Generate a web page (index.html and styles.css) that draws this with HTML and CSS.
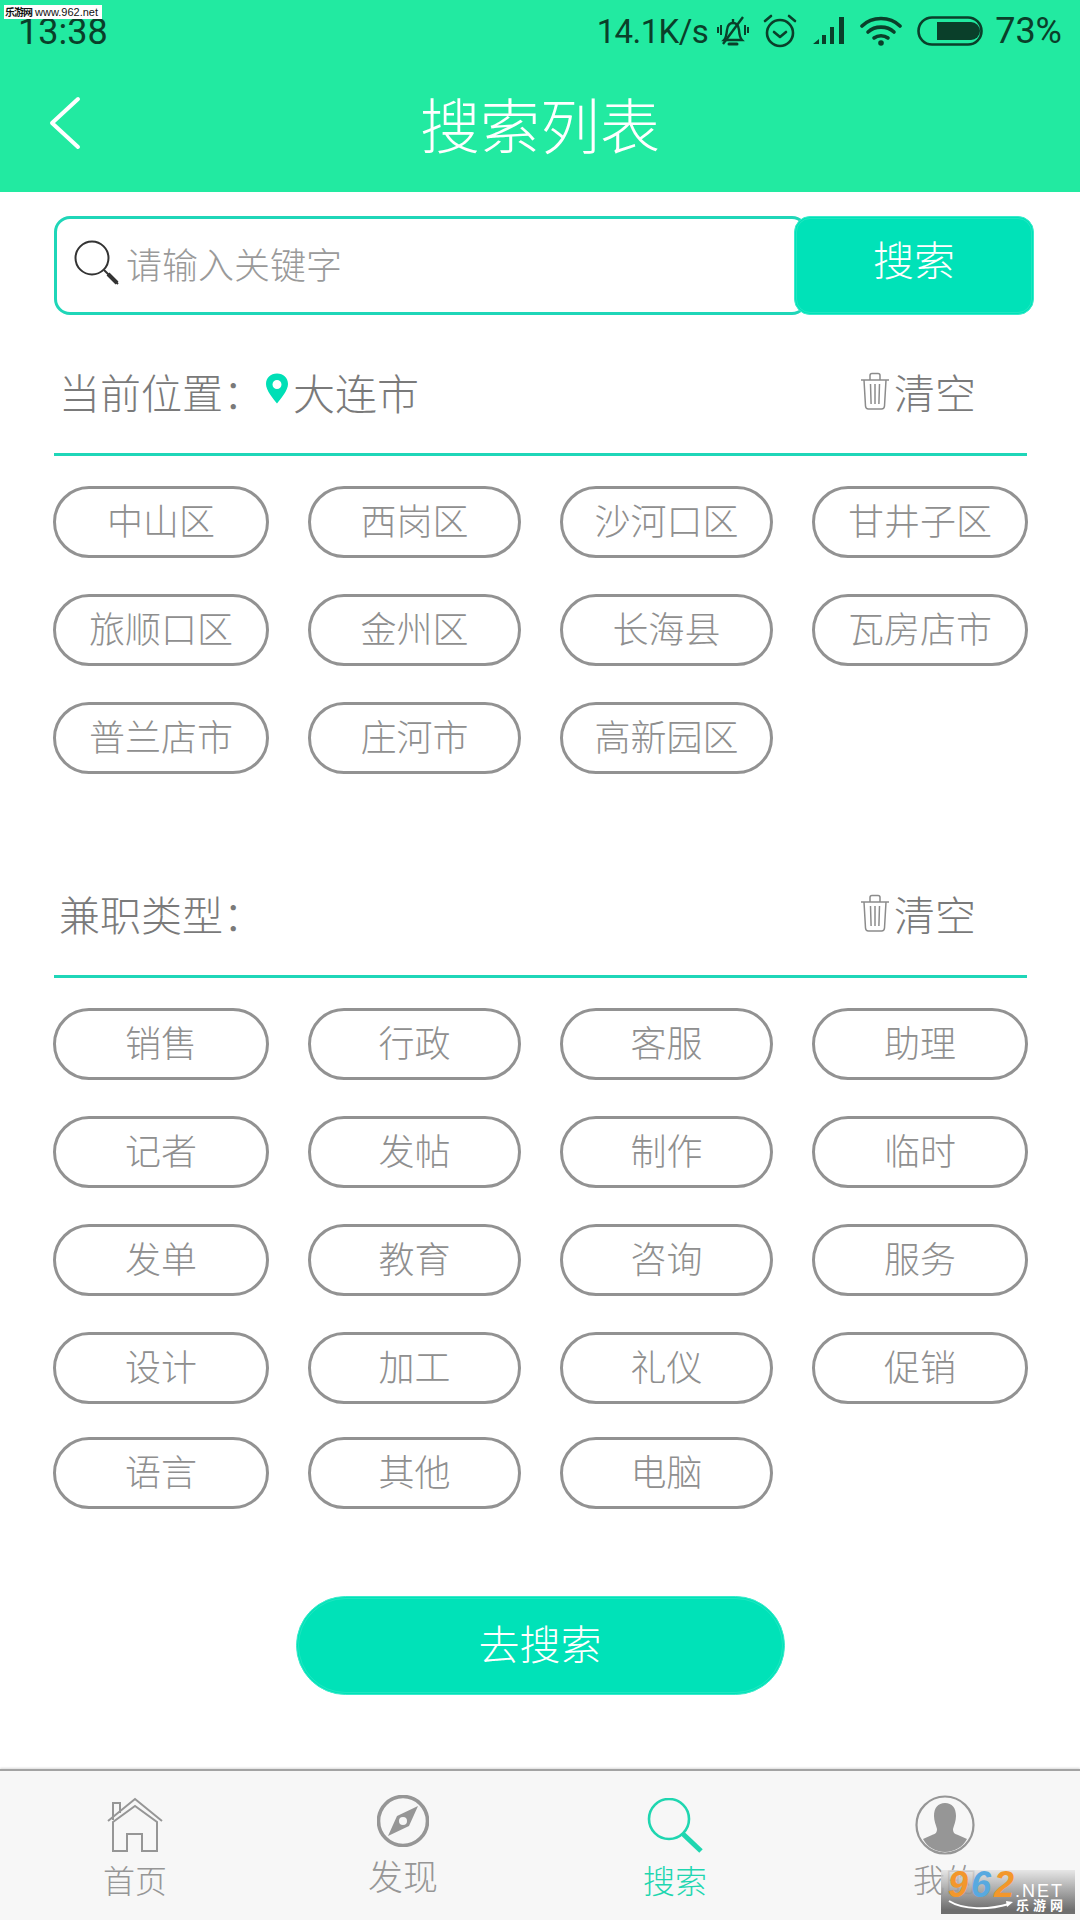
FILE: index.html
```html
<!DOCTYPE html>
<html lang="zh-CN">
<head>
<meta charset="utf-8">
<title>搜索列表</title>
<link rel="stylesheet" href="styles.css">
</head>
<body>
<div class="page">
  <header class="header">
    <div class="status">
      <span class="time">13:38</span>
      <div class="status-right">
        <span class="speed">14.1K/s</span>
        <svg class="st-icon st-bell" width="36" height="34" viewBox="0 0 34 34" fill="none" stroke="#0a3f2a" stroke-width="2.4"><path d="M8 26c2-2 2.500-5 3-10 .5-4.500 3-7 6-7s5.500 2.500 6 7c.3 4 1 8 3 10z"/><path d="M13 30h8" stroke-width="3" stroke-linecap="round"/><path d="M17 9V5"/><path d="M27 3 7 30"/><path d="M2 13v6M5 11v10M29 11v10M32 13v6" stroke-width="2"/></svg>
        <svg class="st-icon" width="36" height="36" viewBox="0 0 36 36" fill="none" stroke="#0a3f2a" stroke-width="2.600"><circle cx="18" cy="20" r="13"/><path d="M12 19l6 5 6-5" stroke-linecap="round" stroke-linejoin="round"/><path d="M3 8l6-5M33 8l-6-5" stroke-linecap="round"/></svg>
        <svg class="st-icon" width="32" height="30" viewBox="0 0 32 30" fill="#0a3f2a"><path d="M0 28 6 23v5zM9 19h4v9H9zM17 11h4v17h-4zM26 1h5v27h-5z"/></svg>
        <svg class="st-icon" width="42" height="32" viewBox="0 0 42 32" fill="none" stroke="#0a3f2a" stroke-width="3.600" stroke-linecap="round"><path d="M2 11C12 1 30 1 40 11"/><path d="M8 17c7-6.500 19-6.500 26 0"/><path d="M14 23c4-3 10-3 14 0"/><circle cx="21" cy="28" r="2.800" fill="#0a3f2a" stroke="none"/></svg>
        <svg class="st-icon" width="66" height="30" viewBox="0 0 66 30"><rect x="1.500" y="1.500" width="63" height="27" rx="13.500" fill="none" stroke="#0a3f2a" stroke-width="2.600"/><path d="M20 6h34a9 9 0 0 1 0 18H20z" fill="#0a3f2a"/></svg>
        <span class="battery">73%</span>
      </div>
    </div>
    <div class="titlebar">
      <svg class="back" width="32" height="54" viewBox="0 0 32 54" fill="none" stroke="#fff" stroke-width="4" stroke-linecap="round" stroke-linejoin="round"><path d="M29 3 3 27l26 24"/></svg>
      <h1 class="title">搜索列表</h1>
    </div>
  </header>

  <main class="main">
    <div class="search">
      <div class="search-input">
        <svg width="46" height="46" viewBox="0 0 46 46" fill="none" stroke="#333"><circle cx="18" cy="18" r="16.500" stroke-width="2"/><path d="M30 30l14 14" stroke-width="2"/><path d="M34 34l9 9" stroke-width="4"/></svg>
        <span class="placeholder">请输入关键字</span>
      </div>
      <div class="search-btn">搜索</div>
    </div>

    <section class="section section-loc">
      <div class="sec-head">
        <div class="sec-title">
          <span>当前位置&#xFF1A;</span>
          <svg class="pin" width="24" height="33" viewBox="0 0 24 32"><path fill-rule="evenodd" fill="#00dfb6" d="M12 1C5.500 1 1 5.500 1 11.500 1 18 8 26 12 31c4-5 11-13 11-19.500C23 5.500 18.500 1 12 1zm0 6.500a4.500 4.500 0 1 1 0 9 4.500 4.500 0 0 1 0-9z"/></svg>
          <span class="city">大连市</span>
        </div>
        <div class="clear">
          <svg width="30" height="40" viewBox="0 0 30 38" fill="none" stroke="#8c8c8c" stroke-width="1.500"><path d="M1 8h28M10 8V3.500q0-2 2-2h6q2 0 2 2V8M4 8l1.500 26q.2 3 3 3h13q2.800 0 3-3L26 8M10.500 12l.6 20M15 12v20M19.500 12l-.6 20"/></svg>
          <span>清空</span>
        </div>
      </div>
      <div class="chips">
        <div class="chip">中山区</div><div class="chip">西岗区</div><div class="chip">沙河口区</div><div class="chip">甘井子区</div>
        <div class="chip">旅顺口区</div><div class="chip">金州区</div><div class="chip">长海县</div><div class="chip">瓦房店市</div>
        <div class="chip">普兰店市</div><div class="chip">庄河市</div><div class="chip">高新园区</div>
      </div>
    </section>

    <section class="section section-type">
      <div class="sec-head">
        <div class="sec-title"><span>兼职类型&#xFF1A;</span></div>
        <div class="clear">
          <svg width="30" height="40" viewBox="0 0 30 38" fill="none" stroke="#8c8c8c" stroke-width="1.500"><path d="M1 8h28M10 8V3.500q0-2 2-2h6q2 0 2 2V8M4 8l1.500 26q.2 3 3 3h13q2.800 0 3-3L26 8M10.500 12l.6 20M15 12v20M19.500 12l-.6 20"/></svg>
          <span>清空</span>
        </div>
      </div>
      <div class="chips">
        <div class="chip">销售</div><div class="chip">行政</div><div class="chip">客服</div><div class="chip">助理</div>
        <div class="chip">记者</div><div class="chip">发帖</div><div class="chip">制作</div><div class="chip">临时</div>
        <div class="chip">发单</div><div class="chip">教育</div><div class="chip">咨询</div><div class="chip">服务</div>
        <div class="chip">设计</div><div class="chip">加工</div><div class="chip">礼仪</div><div class="chip">促销</div>
        <div class="chip chip-tight">语言</div><div class="chip chip-tight">其他</div><div class="chip chip-tight">电脑</div>
      </div>
    </section>

    <div class="go-wrap"><div class="go">去搜索</div></div>
  </main>

  <nav class="tabs">
    <div class="tab tab-home">
      <svg width="56" height="56" viewBox="0 0 56 56" fill="none" stroke="#969696" stroke-width="2"><path d="M1 25 28 3l27 22"/><path d="M6 24V7h7v10"/><path d="M6 55V26L28 10l22 16v29H35V38H20v17z"/></svg>
      <span>首页</span>
    </div>
    <div class="tab tab-find">
      <svg width="52" height="52" viewBox="0 0 52 52"><circle cx="26" cy="26" r="24.500" fill="none" stroke="#969696" stroke-width="3.600"/><path fill-rule="evenodd" fill="#969696" d="M41 11 32 31 11 41l9-20zM26 22a4 4 0 1 0 0 8 4 4 0 0 0 0-8z"/></svg>
      <span>发现</span>
    </div>
    <div class="tab tab-search on">
      <svg width="56" height="56" viewBox="0 0 56 56" fill="none" stroke="#1fd6b0"><circle cx="22" cy="21" r="20" stroke-width="2.600"/><path d="M36 36l18 17" stroke-width="5"/></svg>
      <span>搜索</span>
    </div>
    <div class="tab tab-me">
      <svg width="60" height="60" viewBox="0 0 60 60"><circle cx="30" cy="30" r="28.500" fill="none" stroke="#969696" stroke-width="2.200"/><path fill="#969696" d="M30 8c7 0 11 5 11 13 0 5-2 9-3 13 0 4 2 5 5 6l9 4c-4 8-13 13-22 13S12 52 8 44l9-4c3-1 5-2 5-6-1-4-3-8-3-13 0-8 4-13 11-13z"/></svg>
      <span>我的</span>
    </div>
  </nav>

  <div class="mark-top"><span class="mark-cn">乐游网</span> www.962.net</div>
  <div class="mark-logo">
    <div class="mark-line"><span class="m9">9</span><span class="m6">6</span><span class="m2">2</span><span class="mnet">.NET</span></div>
    <div class="mark-row">
      <svg width="66" height="12" viewBox="0 0 66 12" fill="none" stroke="#fff" stroke-width="2"><path d="M1 2c14 9 40 9 60 3"/><path d="M58 2l7 1-6 5" fill="#fff" stroke="none"/></svg>
      <span class="mark-sub">乐游网</span>
    </div>
  </div>
</div>
</body>
</html>
```

FILE: styles.css
```css
* { box-sizing: border-box; }
html, body { margin: 0; padding: 0; }
body { background: #fff; font-family: "Noto Sans CJK SC", "Noto Sans", sans-serif; font-weight: 300; }
.page { position: relative; width: 1080px; height: 1920px; display: flex; flex-direction: column; overflow: hidden; }

.header { height: 192px; background: #22eaa1; flex: none; }
.status { height: 62px; display: flex; justify-content: space-between; align-items: center; padding: 0 18px; color: #0a3f2a; font-family: Roboto, sans-serif; font-weight: 400; }
.time { font-size: 36px; line-height: 26px; margin-top: 2px; }
.status-right { display: flex; align-items: center; gap: 15px; }
.speed { font-size: 33px; letter-spacing: -.6px; margin-right: -8px; }
.st-bell { margin-right: -4px; }
.battery { font-size: 36px; margin-left: -3px; }
.st-icon { display: block; }
.titlebar { position: relative; height: 130px; display: flex; align-items: center; justify-content: center; padding-bottom: 8px; }
.back { position: absolute; left: 49px; top: 34px; }
.title { margin: 0; font-size: 60px; font-weight: 300; color: #fff; line-height: 1; }

.main { flex: 1; padding: 24px 46px 0 53px; }
.search { display: flex; height: 99px; }
.search-input { flex: 1; margin-right: -14px; border: 3px solid #1fd6b8; border-radius: 16px; display: flex; align-items: center; gap: 6px; padding: 0 0 5px 17px; margin-left: 1px; }
.placeholder { font-size: 36px; color: #9a9a9a; }
.search-btn { flex: none; width: 240px; background: #00e2b8; border: 1px solid #38ebcb; border-radius: 16px; color: #fff; font-size: 41px; display: flex; align-items: center; justify-content: center; padding-bottom: 15px; position: relative; outline: 1px solid rgba(255,255,255,.12); outline-offset: -3px; }

.section { width: 974px; }
.section-loc { margin-top: 38px; }
.section-type { margin-top: 101px; }
.sec-head { height: 103px; margin-left: 1px; border-bottom: 3px solid #1fd6b8; display: flex; justify-content: space-between; align-items: center; padding: 0 51px 24px 5px; color: #7a7a7a; font-size: 41px; }
.sec-head > div { display: flex; align-items: center; }
.pin { margin: -6px 4px 0 1px; }
.city { font-size: 42px; }
.clear { gap: 4px; color: #7a7a7a; }

.chips { display: grid; grid-template-columns: 216px 213px 213px 216px; column-gap: 39px; row-gap: 36px; margin-top: 30px; }
.chip { height: 72px; border: 3px solid #929292; border-radius: 36px; display: flex; align-items: center; justify-content: center; color: #8f8f8f; font-size: 36px; padding-bottom: 6px; }
.chip-tight { margin-top: -3px; }

.go-wrap { display: flex; justify-content: center; margin-top: 87px; padding-right: 7px; }
.go { width: 489px; height: 99px; border-radius: 50px; background: #00e2b8; border: 1px solid #38ebcb; color: #fff; font-size: 41px; display: flex; align-items: center; justify-content: center; padding-bottom: 8px; outline: 1px solid rgba(255,255,255,.12); outline-offset: -3px; }

.tabs { height: 151px; flex: none; background: #f7f7f7; border-top: 2px solid #a3a3a3; box-shadow: 0 -1px 2px rgba(0,0,0,.15); display: grid; grid-template-columns: repeat(4, 1fr); color: #969696; font-size: 32px; }
.tab { display: flex; flex-direction: column; align-items: center; padding-top: 27px; }
.tab span { line-height: 38px; }
.tab svg { display: block; flex: none; }
.tab-home { padding-top: 25px; }
.tab-home span { margin-top: 8px; }
.tab-find { padding-top: 24px; padding-right: 4px; }
.tab-find span { margin-top: 9px; font-size: 35px; }
.tab-search span { margin-top: 6px; }
.tab-me { padding-top: 24px; }
.tab-me span { margin-top: 4px; }
.on { color: #1fd6b0; }

.mark-top { position: absolute; left: 4px; top: 5px; width: 98px; height: 14px; background: #fff; color: #111; font: 400 11px/14px "Liberation Sans", "Noto Sans CJK SC", sans-serif; white-space: nowrap; padding-left: 1px; }
.mark-cn { font: 700 10px/14px "Noto Sans CJK SC", sans-serif; letter-spacing: -1px; }
.mark-logo { position: absolute; left: 941px; top: 1870px; width: 134px; height: 44px; background: linear-gradient(rgba(225,225,225,.75), #6f6f6f 90%); color: #fff; padding: 3px 0 0 7px; }
.mark-line { height: 24px; font: italic 700 36px/24px "Liberation Sans", sans-serif; white-space: nowrap; letter-spacing: 3px; }
.m9 { color: #f3972b; }
.m6 { color: #58a9e0; }
.m2 { color: #f3972b; }
.mnet { font-size: 18px; line-height: 18px; font-style: normal; font-weight: 400; letter-spacing: 2px; margin-left: -2px; }
.mark-row { display: flex; align-items: center; gap: 2px; height: 15px; }
.mark-sub { font: 700 13px/15px "Noto Sans CJK SC", sans-serif; letter-spacing: 4px; white-space: nowrap; }
```
